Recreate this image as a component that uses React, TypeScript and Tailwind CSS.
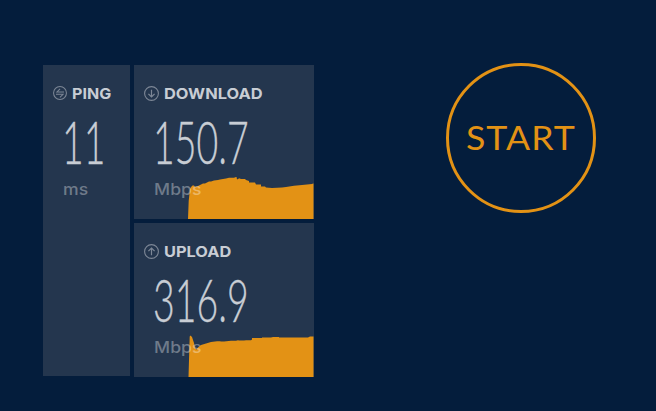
import React from "react";

const DOWNLOAD_AREA =
  "M54 42L54.7 24L56 12L57.5 9.5L58.5 8.5H60L61 10L63 9.5L66 8L69 6.5H71L73 5.5L75 4.5H77L80 3.5L84 3L86 2.5L92 1.5L95 .7H100L102 0H102.5L103 2.3H104L105 1.2L107 2H111L112 3L115 4V5.5H121L122 7.5H127V9.5H131L132 10.5L138 11L148 10.5L152 10L160 8.8L168 8L178 7L179 6.5H179.5V42Z";
const UPLOAD_AREA =
  "M54.5 42L55.7 1.5L56.5 .5L58 2L60 8L61 13L62.5 14.5L64 12.5L67 10L72 8.5L77 7L83 6.2H86L87 6.5H90L97 5.7H102L104 5.2L105 5.5H110L112 5.2H117L118 4.5V3H128V2.5H137L139 2H145V2.5H158V2.5H174L176 1.5H179.5V42Z";

function ModeIcon({ kind }: { kind: "ping" | "down" | "up" }) {
  return (
    <svg
      viewBox="0 0 15 15"
      className={`shrink-0 ${kind === "ping" ? "h-[14px] w-[14px]" : "h-[15px] w-[15px]"}`}
      fill="none"
      stroke="#7d8796"
      strokeWidth="1.1"
    >
      <circle cx="7.5" cy="7.5" r="6.9" />
      {kind === "ping" && <path d="M11.8 6.4H4.2L7.6 3M3.2 8.9H10.8L7.4 12.3" />}
      {kind === "down" && <path d="M7.5 3.8V10.8M4.4 7.8L7.5 10.9L10.6 7.8" strokeWidth="1.2" />}
      {kind === "up" && <path d="M7.5 11.2V4.2M4.4 7.2L7.5 4.1L10.6 7.2" strokeWidth="1.2" />}
    </svg>
  );
}

function Heading({ kind, label, fit }: { kind: "ping" | "down" | "up"; label: string; fit: string }) {
  return (
    <div className="flex h-[18px] items-center gap-[5px]">
      <ModeIcon kind={kind} />
      <span className={`origin-left pt-[2px] text-[15px] leading-[18px] font-bold text-[#c8cdd4] ${fit}`}>{label}</span>
    </div>
  );
}

function Reading({ value, unit }: { value: string; unit: string }) {
  return (
    <div className="relative z-10 pl-[10px]">
      <div className="mt-[10px] -ml-px h-[58px] origin-left scale-x-[0.64] font-[Lato,sans-serif] text-[58.5px] leading-[58px] font-light whitespace-nowrap text-[#c8cdd4] [-webkit-text-stroke:0.35px_#c8cdd4]">
        {value}
      </div>
      <div className="mt-[9px] -ml-px h-[20px] origin-left scale-x-[1.1] pl-px text-[16px] leading-[20px] font-medium text-white/35">
        {unit}
      </div>
    </div>
  );
}

function SpeedCard({ kind, label, value, area, fit }: { kind: "down" | "up"; label: string; value: string; area: string; fit: string }) {
  return (
    <section className="relative h-[154px] w-[180px] bg-[#24364e] pt-[19px] pl-[10px]">
      <Heading kind={kind} label={label} fit={fit} />
      <Reading value={value} unit="Mbps" />
      <svg viewBox="0 0 180 42" className="absolute bottom-0 left-0 h-[42px] w-[180px]">
        <path d={area} fill="#e39215" />
      </svg>
    </section>
  );
}

export default function App() {
  return (
    <main className="flex h-[411px] w-[656px] items-start overflow-hidden bg-[#041d3c] pt-[65px] pl-[43px] font-[Inter,sans-serif]">
      <section className="h-[311px] w-[87px] bg-[#24364e] pt-[19px] pl-[10px]">
        <Heading kind="ping" label="PING" fit="scale-x-[1.07]" />
        <Reading value="11" unit="ms" />
      </section>
      <div className="ml-[4px] flex flex-col gap-[4px]">
        <SpeedCard kind="down" label="DOWNLOAD" value="150.7" area={DOWNLOAD_AREA} fit="scale-x-[1.095]" />
        <SpeedCard kind="up" label="UPLOAD" value="316.9" area={UPLOAD_AREA} fit="scale-x-[1.09]" />
      </div>
      <button className="-mt-[2px] ml-[132px] flex h-[150px] w-[150px] items-center justify-center rounded-full border-[3px] border-[#e39215] font-[Lato,sans-serif] text-[33px] text-[#e39215]">
        <span className="scale-x-[1.08] pb-[1px] tracking-[1px]">START</span>
      </button>
    </main>
  );
}
